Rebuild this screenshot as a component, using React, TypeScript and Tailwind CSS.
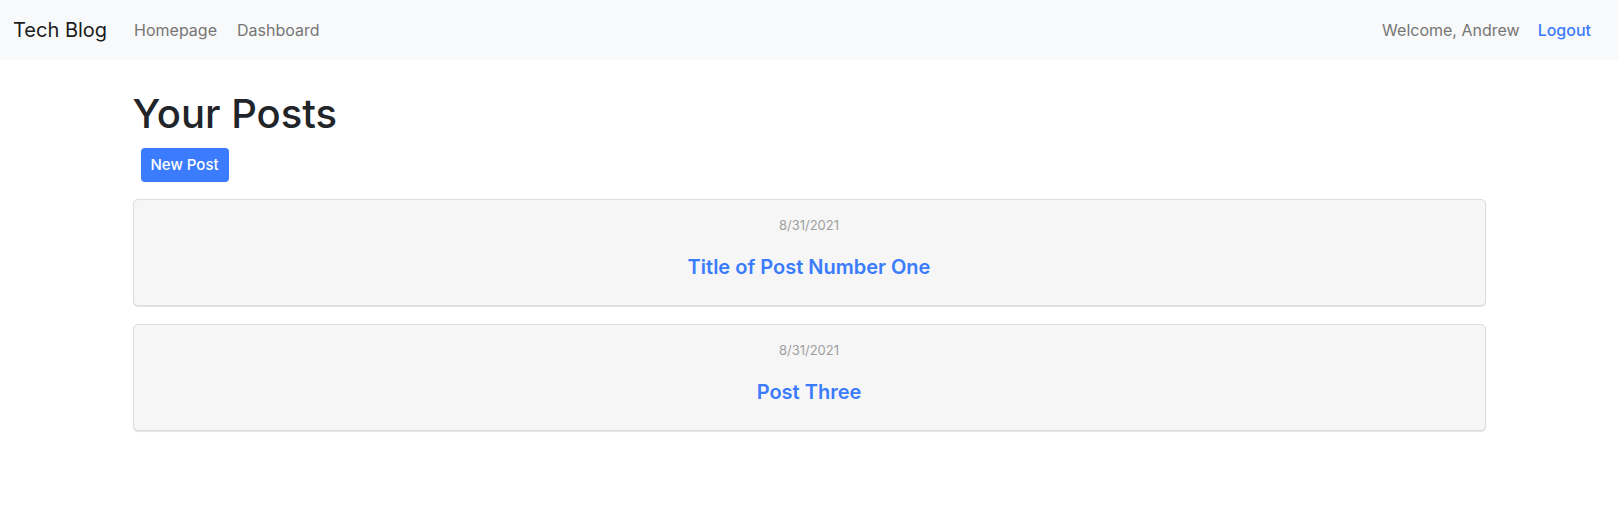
const posts = [
  { id: 1, date: "8/31/2021", title: "Title of Post Number One" },
  { id: 2, date: "8/31/2021", title: "Post Three" },
];

const Navbar = () => {
  return (
    <nav className="h-[60px] bg-[#f8f9fa] flex items-center justify-between pl-[13px] pr-[27px]">
      <div className="flex items-center">
        <a href="#" className="text-[20px] text-[#1c1c1c] mr-[27px]">
          Tech Blog
        </a>
        <a href="#" className="text-[16px] text-[#767676] mr-[20px]">
          Homepage
        </a>
        <a href="#" className="text-[16px] text-[#767676]">
          Dashboard
        </a>
      </div>
      <div className="flex items-center">
        <span className="text-[16px] text-[#767676] mr-[18px]">Welcome, Andrew</span>
        <a href="#" className="text-[16px] font-medium text-[#3a7cfd]">
          Logout
        </a>
      </div>
    </nav>
  );
};

const PostCard = ({ date, title }: { date: string; title: string }) => {
  return (
    <div className="h-[107px] bg-[#f6f6f6] border border-[#dddddd] rounded-[5px] shadow-[0_1px_1px_rgba(0,0,0,0.12)] flex flex-col items-center pt-[15px]">
      <p className="text-[13px] leading-[20px] text-[#a0a0a0]">{date}</p>
      <a href="#" className="mt-[18px] text-[20px] leading-[28px] font-semibold text-[#3a7cfd]">
        {title}
      </a>
    </div>
  );
};

export default function App() {
  return (
    <div className="min-h-screen bg-white font-['Inter',sans-serif]">
      <Navbar />
      <main className="w-[1353px] mx-auto">
        <h1 className="mt-[30px] text-[40px] leading-[48px] font-medium text-[#212529]">Your Posts</h1>
        <button className="mt-[10px] ml-[8px] h-[34px] px-[10px] rounded-[4px] bg-[#3a7cfd] text-white text-[15px] font-medium">
          New Post
        </button>
        <div className="mt-[17px] flex flex-col gap-[18px]">
          {posts.map((post) => (
            <PostCard key={post.id} date={post.date} title={post.title} />
          ))}
        </div>
      </main>
    </div>
  );
}
